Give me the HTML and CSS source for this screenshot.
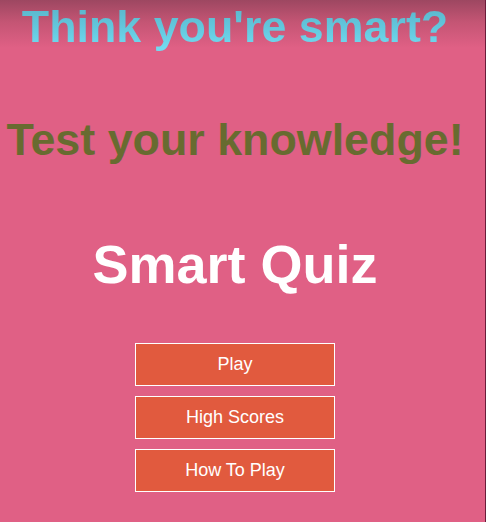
FILE: index.html
```html
<!DOCTYPE html>
<html lang="en">
<head>
<meta charset="utf-8">
<title>Smart Quiz</title>
<link rel="stylesheet" href="styles.css">
</head>
<body>
<main class="page">
  <h1 class="tagline">Think you're smart?</h1>
  <h2 class="subline">Test your knowledge!</h2>
  <h1 class="brand">Smart Quiz</h1>
  <nav class="menu">
    <button class="menu-btn">Play</button>
    <button class="menu-btn">High Scores</button>
    <button class="menu-btn">How To Play</button>
  </nav>
</main>
</body>
</html>
```
FILE: styles.css
```css
html {
  background: #e06085;
}
body {
  margin: 0;
  min-height: 100vh;
  box-sizing: border-box;
  border-right: 1px solid #6a1d3b;
  background: linear-gradient(to bottom, #9d4761 0px, #c45574 22px, #e06085 48px, #e06085 100%);
  font-family: "Liberation Sans", Arial, sans-serif;
}
.page {
  width: 470px;
  display: flex;
  flex-direction: column;
  align-items: center;
}
.tagline {
  margin: 0;
  font-size: 44.8px;
  line-height: 52px;
  font-weight: bold;
  white-space: nowrap;
  background: linear-gradient(to bottom, #58b1c6 0px, #62c6dc 26px, #72daf0 48px);
  -webkit-background-clip: text;
  background-clip: text;
  color: transparent;
}
.subline {
  margin: 60.5px 0 0;
  font-size: 44.8px;
  line-height: 52px;
  font-weight: bold;
  white-space: nowrap;
  color: #686b30;
}
.brand {
  margin: 68.5px 0 0;
  font-size: 54px;
  line-height: 62px;
  font-weight: bold;
  color: #ffffff;
}
.menu {
  margin-top: 48px;
  display: flex;
  flex-direction: column;
  gap: 10px;
}
.menu-btn {
  width: 200px;
  height: 43px;
  margin: 0;
  padding: 0;
  background: #e15a3e;
  border: 1px solid #ffffff;
  color: #ffffff;
  font-family: "Liberation Sans", Arial, sans-serif;
  font-size: 18px;
  cursor: pointer;
}
```
